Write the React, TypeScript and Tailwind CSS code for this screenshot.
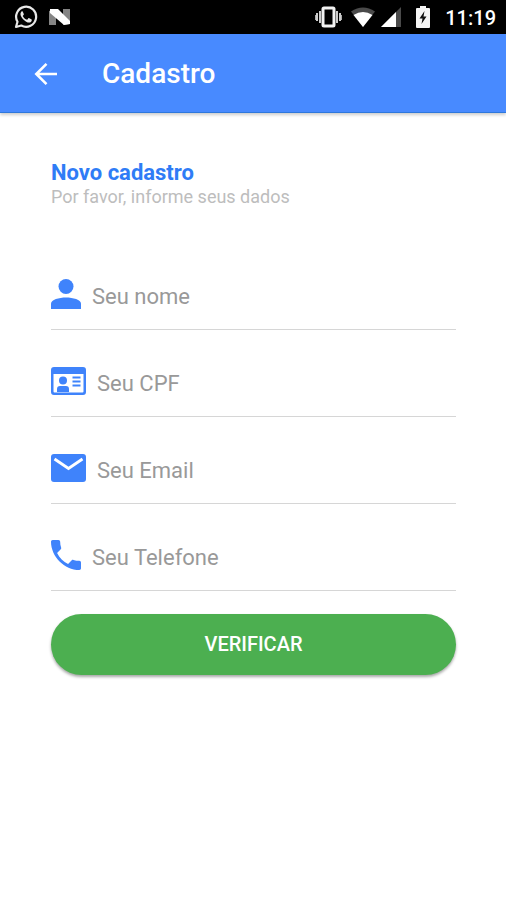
import React from 'react';

const WhatsappIcon = () => (
  <svg viewBox="0 0 24 24" className="size-6" fill="none" aria-hidden="true">
    <path d="M2 22l1.500-5.200A10 10 0 1 1 7.300 20.500z" stroke="#e8e8e8" strokeWidth="2.200" strokeLinejoin="round" />
    <path
      d="M8.700 6.500c-.4-.3-1-.2-1.400.3-1.300 1.500-1 3.500.3 5.500 1.500 2.300 3.500 4.200 6 5.100 1.800.6 3.700-.2 4.100-1.700.2-.9.100-1.200-.4-1.500l-2-1c-.5-.2-.8-.1-1.100.3l-.8 1c-.2.300-.6.300-1 .1-1.600-.8-2.700-1.900-3.500-3.300-.2-.4-.1-.6.200-.9.600-.6.900-1 .7-1.500l-.9-2z"
      fill="#e8e8e8"
    />
  </svg>
);

const NougatIcon = () => (
  <svg viewBox="0 0 22 18" className="h-[18px] w-[22px]" aria-hidden="true">
    <path d="M0 3l7-2v16H0zM14 1h7v15l-7 1z" fill="#858585" />
    <path d="M1 1h8l12 12v3l-6 1L1 5z" fill="#fff" />
  </svg>
);

const VibrateIcon = () => (
  <svg viewBox="0 0 27 22" className="h-[22px] w-[27px]" aria-hidden="true">
    <path d="M0 9h1v5H0zM26 9h1v5h-1z" fill="#aaa" />
    <path d="M1 7h2v8H1zM24 7h2v8h-2zM4 5h2v12H4zM21 5h2v12h-2z" fill="#ccc" />
    <rect x="8" y="2" width="11" height="18" rx="1" fill="none" stroke="#f2f2f2" strokeWidth="3" />
  </svg>
);

const WifiIcon = () => (
  <svg viewBox="0 0 24 20" className="h-5 w-6" aria-hidden="true">
    <path d="M0 4.500Q12-3.500 24 4.500L12 20z" fill="#4a4a4a" />
    <path d="M2.500 8Q12 2 21.500 8L12 20z" fill="#fff" />
  </svg>
);

const SignalIcon = () => (
  <svg viewBox="0 0 20 20" className="size-5" aria-hidden="true">
    <path d="M20 0v20H0z" fill="#4a4a4a" />
    <path d="M15 5v15H0z" fill="#fff" />
  </svg>
);

const BatteryIcon = () => (
  <svg viewBox="0 0 14 22" className="h-[22px] w-3.5" aria-hidden="true">
    <path d="M4 0h6v2h3q1 0 1 1v18q0 1-1 1H1q-1 0-1-1V3q0-1 1-1h3z" fill="#f5f5f5" />
    <path d="M8.500 5L3.500 12.500H6.500L5.500 18L10.500 10.500H7.500z" fill="#111" />
  </svg>
);

const ArrowBackIcon = () => (
  <svg viewBox="0 0 24 24" className="size-6" fill="none" stroke="currentColor" strokeWidth="2.600" aria-hidden="true">
    <path d="M23 12H3M12.500 1.800L2.300 12l10.200 10.200" />
  </svg>
);

const PersonIcon = () => (
  <svg viewBox="0 0 30 30" className="size-[30px]" fill="currentColor" aria-hidden="true">
    <circle cx="15" cy="7.500" r="7.500" />
    <path d="M0 30v-5.500c0-3.800 8-6 15-6s15 2.200 15 6V30z" />
  </svg>
);

const CardIcon = () => (
  <svg viewBox="0 0 35 28" className="h-7 w-[35px]" fill="currentColor" aria-hidden="true">
    <path fillRule="evenodd" d="M3 0h29q3 0 3 3v22q0 3-3 3H3q-3 0-3-3V3q0-3 3-3zM2.500 7v17.500q0 1 1 1h28q1 0 1-1V7z" />
    <circle cx="12" cy="13.500" r="4" />
    <path d="M6 25v-3q0-3 3-3h6q3 0 3 3v3zM21.500 9.500h8v2h-8zM21.500 13.500h8v2h-8zM21.500 17.500h8v2h-8z" />
  </svg>
);

const MailIcon = () => (
  <svg viewBox="0 0 35 28" className="h-7 w-[35px]" aria-hidden="true">
    <rect width="35" height="28" rx="3" fill="currentColor" />
    <path d="M3.500 5L17.500 14.500L31.500 5" fill="none" stroke="#fff" strokeWidth="2.800" />
  </svg>
);

const PhoneIcon = () => (
  <svg viewBox="64 64 384 384" className="size-[30px]" fill="currentColor" aria-hidden="true">
    <path d="M426.666 330.667a250.385 250.385 0 0 1-75.729-11.729c-7.469-2.136-16-1.073-21.332 5.333l-46.939 46.928c-60.802-30.928-109.864-80-140.802-140.803l46.939-46.927c5.332-5.333 7.462-13.864 5.332-21.333-8.537-24.531-12.802-50.136-12.802-76.803C181.333 73.604 171.734 64 160 64H85.333C73.599 64 64 73.604 64 85.333 64 274.656 237.344 448 426.666 448 438.400 448 448 438.400 448 426.667v-74.667c0-11.730-9.600-21.333-21.334-21.333z" />
  </svg>
);

const fields = [
  { id: 'nome', label: 'Seu nome', type: 'text', Icon: PersonIcon },
  { id: 'cpf', label: 'Seu CPF', type: 'text', Icon: CardIcon },
  { id: 'email', label: 'Seu Email', type: 'email', Icon: MailIcon },
  { id: 'telefone', label: 'Seu Telefone', type: 'tel', Icon: PhoneIcon },
];

const StatusBar: React.FC = () => (
  <div className="flex h-[34px] items-center justify-between bg-black pr-2.5 pl-3.5 text-white">
    <div className="flex items-center gap-[11px]">
      <WhatsappIcon />
      <NougatIcon />
    </div>
    <div className="flex items-center">
      <div className="flex items-center gap-[9px]">
        <VibrateIcon />
        <WifiIcon />
      </div>
      <div className="ml-1.5 flex items-center gap-[15px]">
        <SignalIcon />
        <BatteryIcon />
        <span className="pt-0.5 text-xl leading-6 font-medium">11:19</span>
      </div>
    </div>
  </div>
);

const App: React.FC = () => {
  return (
    <div className="min-h-screen bg-white font-['Roboto',sans-serif]">
      <StatusBar />

      <header className="flex h-[79px] items-center gap-11 border-b border-[#2f78dc] bg-[#488aff] px-[34px] pt-0.5 text-white shadow-[0_2px_3px_rgba(0,0,0,0.2)]">
        <button type="button" aria-label="Voltar">
          <ArrowBackIcon />
        </button>
        <h1 className="text-[28px] leading-8 font-medium">Cadastro</h1>
      </header>

      <main className="pt-12 pr-[50px] pl-[51px]">
        <h2 className="text-[22px] leading-6 font-bold text-[#2f7cf6]">Novo cadastro</h2>
        <p className="text-lg leading-6 text-[#bdbdbd]">Por favor, informe seus dados</p>

        <form className="pt-[34px]">
          {fields.map(({ id, label, type, Icon }) => (
            <div key={id} className="flex h-[87px] items-center gap-[11px] border-b border-[#d6d6d6] pt-4 text-[#3f83fb]">
              <label htmlFor={id} aria-label={label}>
                <Icon />
              </label>
              <input
                id={id}
                type={type}
                placeholder={label}
                className="min-w-0 flex-1 pt-1.5 text-[22px] leading-8 text-gray-800 outline-none placeholder:text-[#999]"
              />
            </div>
          ))}

          <button
            type="button"
            className="mt-[23px] h-[61px] w-full rounded-full bg-[#4caf50] pb-0.5 text-xl font-medium text-white shadow-[0_2px_3px_rgba(0,0,0,0.35)]"
          >
            VERIFICAR
          </button>
        </form>
      </main>
    </div>
  );
};

export default App;
